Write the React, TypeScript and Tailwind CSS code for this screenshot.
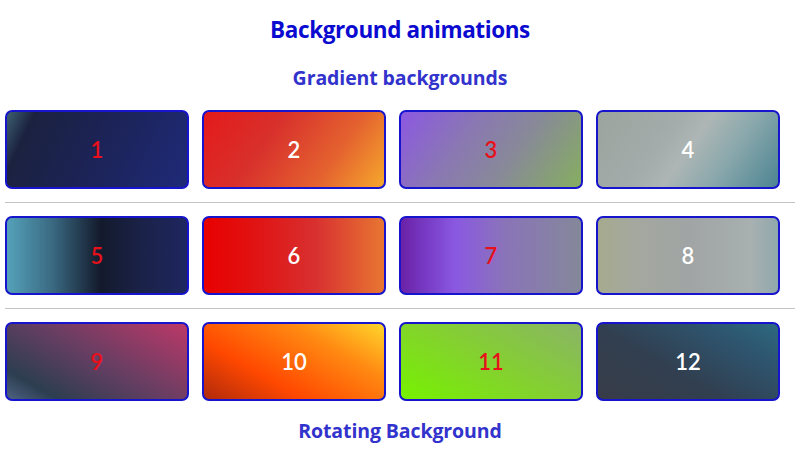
const rows: { n: number; bg: string; light?: boolean }[][] = [
  [
    { n: 1, bg: "bg-[linear-gradient(115deg,#3d6070_0%,#1b2240_13%,#1c2356_50%,#1f2a78_100%)]" },
    { n: 2, bg: "bg-[linear-gradient(125deg,#e41a1a_0%,#d8302c_35%,#e4622f_70%,#f6a82c_100%)]", light: true },
    { n: 3, bg: "bg-[linear-gradient(125deg,#8c58e2_0%,#8a78b2_35%,#88889a_60%,#86ae60_100%)]" },
    { n: 4, bg: "bg-[linear-gradient(125deg,#9ca49e_0%,#a4acac_38%,#aeb6b5_50%,#8aa8ac_70%,#4c8492_100%)]", light: true },
  ],
  [
    { n: 5, bg: "bg-[linear-gradient(90deg,#54a2ba_0%,#3a6a82_25%,#141a2c_52%,#1a2248_75%,#1e2660_100%)]" },
    { n: 6, bg: "bg-[linear-gradient(90deg,#e80000_0%,#e01414_30%,#d83030_62%,#e87632_100%)]", light: true },
    { n: 7, bg: "bg-[linear-gradient(90deg,#6a22a6_0%,#7a3ec8_16%,#8a58e2_30%,#8a74b8_58%,#84889a_100%)]" },
    { n: 8, bg: "bg-[linear-gradient(90deg,#a6aa8e_0%,#a4a89e_20%,#a0a4a4_50%,#a8b0b0_85%,#90a8ac_100%)]", light: true },
  ],
  [
    { n: 9, bg: "bg-[linear-gradient(30deg,#4e6282_0%,#2c3e50_16%,#643e62_50%,#bc3868_100%)]" },
    { n: 10, bg: "bg-[linear-gradient(30deg,#b02a0c_0%,#ff4800_32%,#ff8a12_70%,#ffd62c_100%)]", light: true },
    { n: 11, bg: "bg-[linear-gradient(30deg,#76f200_0%,#84d030_50%,#8ab466_100%)]" },
    { n: 12, bg: "bg-[linear-gradient(30deg,#383c48_0%,#313f50_40%,#2e5670_78%,#2d6a80_100%)]", light: true },
  ],
];

function Tile({ n, bg, light }: { n: number; bg: string; light?: boolean }) {
  return (
    <div
      className={`h-[79px] rounded-[7px] border-2 border-[#1614cc] flex items-center justify-center ${bg}`}
    >
      <span
        className={`text-[22px] font-semibold font-['Lato',sans-serif] ${light ? "text-white" : "text-[#e8101a]"}`}
      >
        {n}
      </span>
    </div>
  );
}

export default function App() {
  return (
    <div className="w-[800px] h-[450px] bg-white flex flex-col items-center font-['Open_Sans',sans-serif] overflow-hidden">
      <h1 className="mt-[13px] text-[22.5px] leading-[34px] font-bold text-[#0a0ad0] tracking-[-0.4px]">
        Background animations
      </h1>
      <h2 className="mt-[17px] text-[19.5px] leading-[28px] font-bold text-[#3232cc] tracking-[-0.1px]">
        Gradient backgrounds
      </h2>

      <div className="w-full px-[5px] mt-[18px]">
        {rows.map((row, i) => (
          <div key={i}>
            {i > 0 && <div className="h-px bg-[#c4c4c4] my-[13px]" />}
            <div className="grid grid-cols-[repeat(4,184px)] gap-x-[13px]">
              {row.map((t) => (
                <Tile key={t.n} {...t} />
              ))}
            </div>
          </div>
        ))}
      </div>

      <h2 className="mt-[16px] text-[19.5px] leading-[28px] font-bold text-[#3232cc] tracking-[-0.1px]">
        Rotating Background
      </h2>
    </div>
  );
}
